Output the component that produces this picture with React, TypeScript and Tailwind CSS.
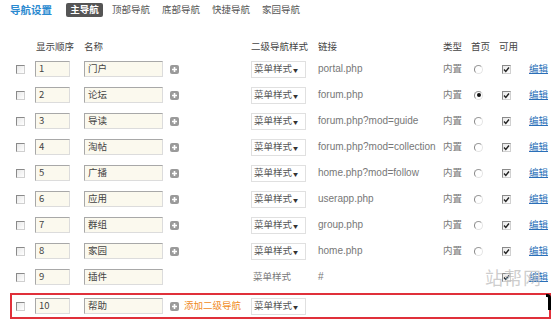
import React from 'react';

type Row = {
    order: string;
    name: string;
    link: string;
    home?: boolean;
    plain?: boolean;
};

const rows: Row[] = [
    { order: "1", name: "门户", link: "portal.php" },
    { order: "2", name: "论坛", link: "forum.php", home: true },
    { order: "3", name: "导读", link: "forum.php?mod=guide" },
    { order: "4", name: "淘帖", link: "forum.php?mod=collection" },
    { order: "5", name: "广播", link: "home.php?mod=follow" },
    { order: "6", name: "应用", link: "userapp.php" },
    { order: "7", name: "群组", link: "group.php" },
    { order: "8", name: "家园", link: "home.php" },
    { order: "9", name: "插件", link: "#", plain: true },
];

const tabs = ["顶部导航", "底部导航", "快捷导航", "家园导航"];

function Checkbox({ checked }: { checked?: boolean }) {
    return (
        <span className="relative block w-[9px] h-[9px] border border-t-[#8a8a8a] border-l-[#8a8a8a] border-r-[#d0d0d0] border-b-[#d0d0d0] bg-gradient-to-br from-[#e8e8e8] to-white">
            {checked && (
                <svg viewBox="0 0 9 9" className="absolute -left-px -top-px w-[9px] h-[9px]">
                    <path d="M2 4.5 L3.8 6.5 L7 2.5" fill="none" stroke="#222" strokeWidth="1.4" />
                </svg>
            )}
        </span>
    );
}

function Radio({ on }: { on?: boolean }) {
    return (
        <span className="flex items-center justify-center w-[9px] h-[9px] rounded-full border border-l-[#888] border-t-[#999] border-r-[#e4e4e4] border-b-[#e4e4e4] bg-white">
            {on && <span className="block w-[4px] h-[4px] rounded-full bg-[#111]" />}
        </span>
    );
}

function Plus() {
    return (
        <svg viewBox="0 0 9 9" className="w-[9px] h-[9px]">
            <rect x="0" y="0" width="9" height="9" rx="2" fill="#9a9a9a" />
            <path d="M4.5 2 V7 M2 4.5 H7" stroke="#fff" strokeWidth="1.6" />
        </svg>
    );
}

function Input({ value, width }: { value: string; width: string }) {
    return (
        <div className={`${width} h-[16px] flex items-center pl-[3px] border border-t-[#a8a8a8] border-l-[#a8a8a8] border-r-[#dcdcdc] border-b-[#dcdcdc] bg-[#fbf9ee] text-[9.5px] leading-none text-[#444]`}>
            {value}
        </div>
    );
}

function Select() {
    return (
        <div className="w-[55px] h-[17px] flex items-center justify-between pl-[2px] pr-[7px] border border-[#e0e0e0] bg-white text-[9.5px] leading-none text-[#555] whitespace-nowrap">
            <span>菜单样式</span>
            <span className="text-[5px] text-[#333]">▼</span>
        </div>
    );
}

function NavRow({ row, last }: { row: Row; last?: boolean }) {
    return (
        <div className={`flex items-center leading-none whitespace-nowrap ${last ? 'h-[26px] border-2 border-[#e0303a] mt-[3px]' : 'h-[26px] border-2 border-transparent'}`}>
            <div className="w-[23px] pl-[4px]"><Checkbox /></div>
            <div className="w-[49px]"><Input value={row.order} width="w-[35px]" /></div>
            <div className="w-[86px]"><Input value={row.name} width="w-[79px]" /></div>
            <div className="w-[81px] flex items-center gap-[5px]">
                {!row.plain && <Plus />}
                {last && <span className="text-[9.5px] text-[#f08a24]">添加二级导航</span>}
            </div>
            <div className="w-[67px] flex items-center">
                {row.plain ? <span className="pl-[2px] text-[9.5px] text-[#777]">菜单样式</span> : <Select />}
            </div>
            <div className="w-[125px] text-[10px] text-[#777] font-['Liberation_Sans',sans-serif]">{row.link}</div>
            <div className="w-[31px] text-[9.5px] text-[#777]">{row.plain || last ? '' : '内置'}</div>
            <div className="w-[28px]">{!row.plain && !last && <Radio on={row.home} />}</div>
            <div className="w-[27px]">{!last && <Checkbox checked />}</div>
            <div className="text-[9.5px] text-[#2a6fb8] underline">{last ? '' : '编辑'}</div>
        </div>
    );
}

export default function App() {
    return (
        <div className="relative w-[554px] h-[319px] bg-white overflow-hidden font-['Noto_Sans_CJK_SC',sans-serif]">
            <div className="flex items-center h-[20px] pl-[10px] text-[9.5px] leading-none whitespace-nowrap">
                <span className="w-[56px] text-[10.5px] font-bold text-[#2b8ad0]">导航设置</span>
                <span className="w-[37px] h-[14px] flex items-center justify-center mr-[9px] bg-[#555] text-white font-bold rounded-[2px]">主导航</span>
                {tabs.map(t => (
                    <span key={t} className="w-[50px] text-[#555]">{t}</span>
                ))}
            </div>

            <div className="flex items-center h-[16px] mt-[19px] pl-[36px] text-[9.5px] leading-none text-[#444] whitespace-nowrap">
                <span className="w-[48px]">显示顺序</span>
                <span className="w-[167px]">名称</span>
                <span className="w-[67px]">二级导航样式</span>
                <span className="w-[125px]">链接</span>
                <span className="w-[28px]">类型</span>
                <span className="w-[28px]">首页</span>
                <span>可用</span>
            </div>

            <div className="ml-[10px] w-[541px] mt-[1px]">
                {rows.map(r => <NavRow key={r.order} row={r} />)}
                <NavRow row={{ order: "10", name: "帮助", link: "" }} last />
            </div>

            {/* watermark */}
            <div className="absolute left-[485px] top-[268px] flex items-center gap-[1px] text-[18px] leading-none text-[#bdbdbd]/75">
                <span>站</span><span>帮</span><span>网</span>
            </div>
            <div className="absolute left-[546px] top-[294px] w-[5px] h-[16px] border-t-[3px] border-r-[3px] border-black rounded-tr-[4px]" />
        </div>
    );
}
